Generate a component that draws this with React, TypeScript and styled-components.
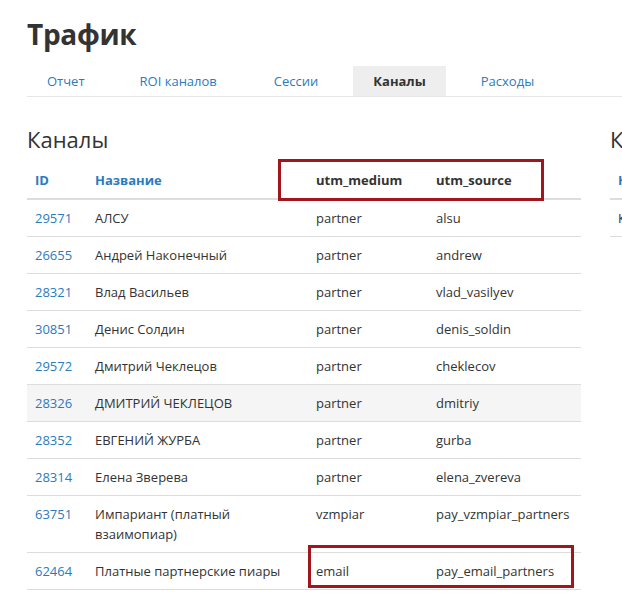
import React from "react";
import styled, { createGlobalStyle } from "styled-components";

const GlobalStyle = createGlobalStyle`
  html, body {
    margin: 0;
    padding: 0;
    background: #ffffff;
    overflow: hidden;
  }
  body {
    font-family: "Open Sans", "Liberation Sans", sans-serif;
    color: #333333;
    font-size: 13px;
  }
`;

const Page = styled.div`
  padding: 16px 0 0 27px;
  width: 1200px;
`;

const Title = styled.h1`
  margin: 0;
  font-size: 28px;
  line-height: 36px;
  font-weight: 700;
  color: #333333;
  letter-spacing: -0.3px;
`;

const Tabs = styled.ul`
  display: flex;
  list-style: none;
  margin: 14px 0 0 0;
  padding: 0;
  border-bottom: 1px solid #e6e6e6;
`;

const Tab = styled.li<{ $active?: boolean }>`
  padding: 0 20px;
  margin-right: 15px;
  height: 30px;
  line-height: 30px;
  font-size: 13px;
  color: ${(p) => (p.$active ? "#333333" : "#2b7bbd")};
  font-weight: ${(p) => (p.$active ? 700 : 400)};
  background: ${(p) => (p.$active ? "#eeeeee" : "transparent")};
  &:nth-child(2) {
    margin-right: 17px;
  }
`;

const Columns = styled.div`
  display: flex;
  align-items: flex-start;
`;

const Section = styled.section<{ $width?: number; $offset?: number }>`
  flex: 0 0 ${(p) => (p.$width ? `${p.$width}px` : "auto")};
  margin-left: ${(p) => p.$offset ?? 0}px;
`;

const Heading = styled.h2`
  margin: 28px 0 9px;
  font-size: 22px;
  line-height: 28px;
  font-weight: 400;
  color: #333333;
`;

const TableWrap = styled.div`
  position: relative;
`;

const Table = styled.table`
  width: 100%;
  border-collapse: collapse;
  table-layout: fixed;
`;

const Th = styled.th<{ $link?: boolean; $w?: number }>`
  box-sizing: border-box;
  text-align: left;
  padding: 8px;
  line-height: 20px;
  font-size: 13px;
  font-weight: 700;
  color: ${(p) => (p.$link ? "#2b7bbd" : "#333333")};
  border-bottom: 2px solid #dddddd;
  width: ${(p) => (p.$w ? `${p.$w}px` : "auto")};
  white-space: nowrap;
`;

const Tr = styled.tr<{ $hl?: boolean }>`
  background: ${(p) => (p.$hl ? "#f5f5f5" : "transparent")};
  &:last-child td {
    border-bottom: 1px solid #dddddd;
  }
`;

const Td = styled.td<{ $link?: boolean }>`
  padding: 8px;
  line-height: 20px;
  font-size: 13px;
  vertical-align: top;
  border-top: 1px solid #dddddd;
  color: ${(p) => (p.$link ? "#2b7bbd" : "#333333")};
  white-space: nowrap;
`;

const NameTd = styled(Td)`
  white-space: normal;
  padding-right: 18px;
`;

const Mark = styled.div<{ $left: number; $top: number; $w: number; $h: number }>`
  position: absolute;
  left: ${(p) => p.$left}px;
  top: ${(p) => p.$top}px;
  width: ${(p) => p.$w}px;
  height: ${(p) => p.$h}px;
  border: 3px solid #a1161c;
  box-sizing: border-box;
  pointer-events: none;
`;

const rows = [
  { id: "29571", name: "АЛСУ", medium: "partner", source: "alsu" },
  { id: "26655", name: "Андрей Наконечный", medium: "partner", source: "andrew" },
  { id: "28321", name: "Влад Васильев", medium: "partner", source: "vlad_vasilyev" },
  { id: "30851", name: "Денис Солдин", medium: "partner", source: "denis_soldin" },
  { id: "29572", name: "Дмитрий Чеклецов", medium: "partner", source: "cheklecov" },
  { id: "28326", name: "ДМИТРИЙ ЧЕКЛЕЦОВ", medium: "partner", source: "dmitriy", hl: true },
  { id: "28352", name: "ЕВГЕНИЙ ЖУРБА", medium: "partner", source: "gurba" },
  { id: "28314", name: "Елена Зверева", medium: "partner", source: "elena_zvereva" },
  { id: "63751", name: "Импариант (платный взаимопиар)", medium: "vzmpiar", source: "pay_vzmpiar_partners" },
  { id: "62464", name: "Платные партнерские пиары", medium: "email", source: "pay_email_partners" },
];

const tabs = ["Отчет", "ROI каналов", "Сессии", "Каналы", "Расходы"];

export default function App() {
  return (
    <>
      <GlobalStyle />
      <Page>
        <Title>Трафик</Title>
        <Tabs>
          {tabs.map((t) => (
            <Tab key={t} $active={t === "Каналы"}>
              {t}
            </Tab>
          ))}
        </Tabs>
        <Columns>
          <Section $width={554}>
            <Heading>Каналы</Heading>
            <TableWrap>
              <Table>
                <thead>
                  <tr>
                    <Th $link $w={60}>ID</Th>
                    <Th $link $w={221}>Название</Th>
                    <Th $w={120}>utm_medium</Th>
                    <Th>utm_source</Th>
                  </tr>
                </thead>
                <tbody>
                  {rows.map((r) => (
                    <Tr key={r.id} $hl={r.hl}>
                      <Td $link>{r.id}</Td>
                      <NameTd>{r.name}</NameTd>
                      <Td>{r.medium}</Td>
                      <Td>{r.source}</Td>
                    </Tr>
                  ))}
                </tbody>
              </Table>
              <Mark $left={251} $top={-3} $w={266} $h={42} />
              <Mark $left={281} $top={383} $w={266} $h={43} />
            </TableWrap>
          </Section>
          <Section $width={400} $offset={29}>
            <Heading>Кампании</Heading>
            <Table>
              <thead>
                <tr>
                  <Th $link>Название</Th>
                </tr>
              </thead>
              <tbody>
                <Tr>
                  <Td>Кампания</Td>
                </Tr>
              </tbody>
            </Table>
          </Section>
        </Columns>
      </Page>
    </>
  );
}
